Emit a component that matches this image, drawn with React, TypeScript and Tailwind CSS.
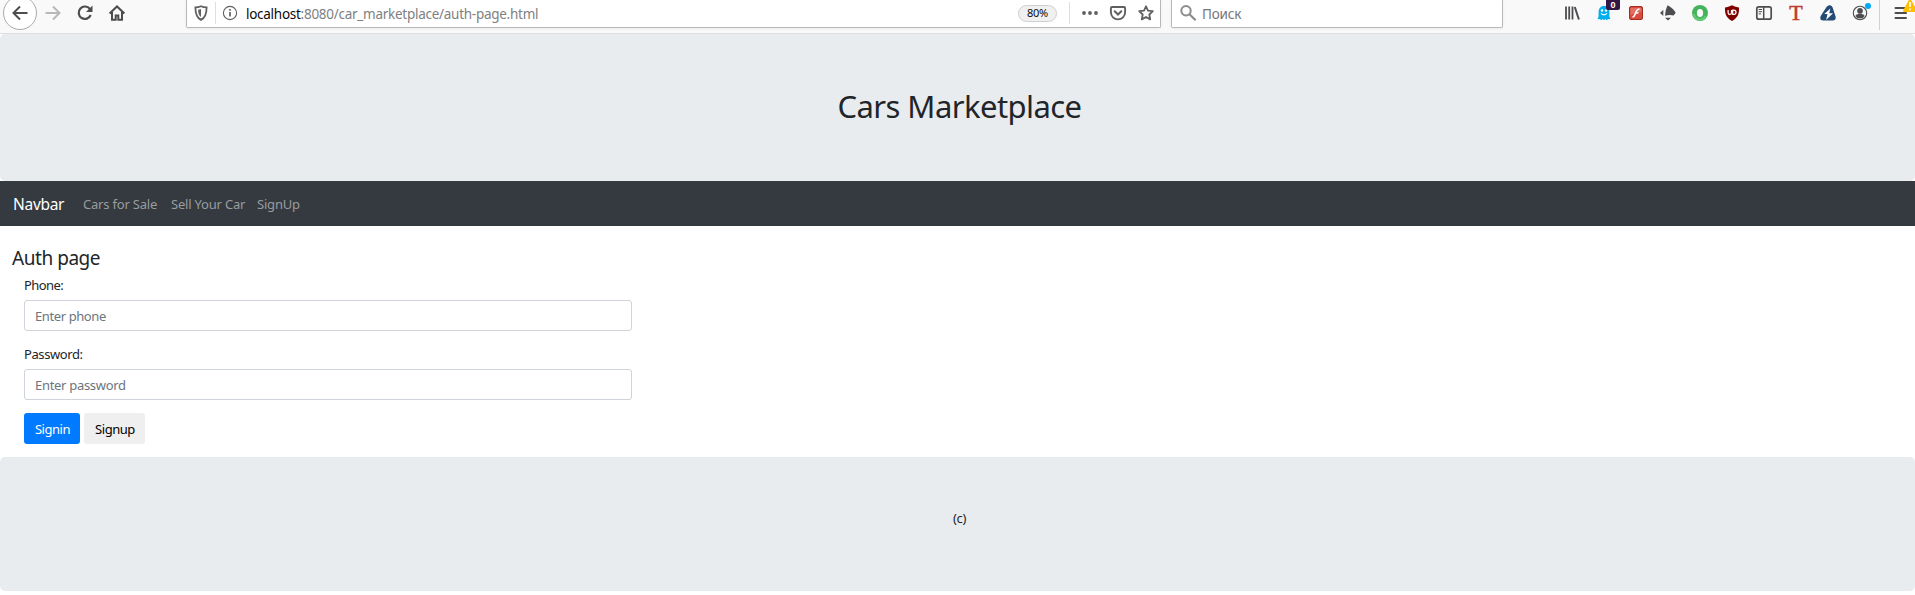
import type { ReactNode } from "react";

function Icon({ children, className = "" }: { children: ReactNode; className?: string }) {
  return (
    <svg viewBox="0 0 16 16" fill="none" className={`block size-4 shrink-0 overflow-visible ${className}`}>
      {children}
    </svg>
  );
}

function Navigation() {
  return (
    <div className="flex h-[26px] w-[186px] shrink-0 items-center pl-[3px] text-[#4d4d4f]">
      <div className="flex size-[34px] shrink-0 items-center justify-center rounded-full border border-[#ababab] bg-white">
        <Icon>
          <path d="M15.500 8H1.500M8 1.500 1.500 8 8 14.500" stroke="currentColor" strokeWidth="2" />
        </Icon>
      </div>
      <Icon className="ml-2 text-[#b8b8b9]">
        <path d="M.5 8h14M8 1.500 14.500 8 8 14.500" stroke="currentColor" strokeWidth="2" />
      </Icon>
      <Icon className="ml-4">
        <path d="M12.900 4A6.200 6.200 0 1 0 13.700 10" stroke="currentColor" strokeWidth="2.200" />
        <path d="M15.500 .5v6.500H9z" fill="currentColor" />
      </Icon>
      <Icon className="ml-4">
        <path d="M.6 8.400 8 1.400l7.400 7M3 7v7.800h3.700v-4.300h2.600v4.300H13V7" stroke="currentColor" strokeWidth="2" />
      </Icon>
    </div>
  );
}

function AddressBar() {
  return (
    <div className="flex h-7 w-[975px] shrink-0 items-center rounded-b-[2px] border border-t-0 border-[#b8b8b8] bg-white pb-px pl-[6px] text-[#606062] shadow-[0_1px_3px_rgba(0,0,0,0.06)]">
      <Icon>
        <path d="M8 1.200c2 .9 4 1.200 5.600 1.200 0 6-.8 10-5.600 12.500C3.200 12.400 2.400 8.400 2.400 2.400 4 2.400 6 2.100 8 1.200z" stroke="currentColor" strokeWidth="1.800" />
        <path d="M8 4v8C5.700 10.500 5.200 8 5.100 4.700 6.200 4.600 7.200 4.400 8 4z" fill="currentColor" />
      </Icon>
      <span className="ml-[6px] h-[22px] w-px bg-[#dedede]" />
      <Icon className="ml-[6px]">
        <circle cx="8" cy="8" r="6.600" stroke="currentColor" strokeWidth="1.100" />
        <path d="M8 7v4.500M8 4v1.700" stroke="currentColor" strokeWidth="1.700" />
      </Icon>
      <span className="ml-[8px] pt-px text-[13.500px] leading-5 tracking-[-0.270px] whitespace-nowrap text-[#808082]">
        <span className="text-[#0c0c0d]">localhost</span>:8080/car_marketplace/auth-page.html
      </span>
      <span className="ml-auto flex h-[17px] w-[39px] items-center justify-center rounded-full border border-[#cfcfcf] bg-[#f0f0f0] pt-px text-[11px] tracking-[-0.3px] text-[#0c0c0d]">
        80%
      </span>
      <span className="ml-3 h-[22px] w-px bg-[#dedede]" />
      <Icon className="ml-[12px]">
        <g fill="currentColor">
          <circle cx="2" cy="8" r="1.900" />
          <circle cx="8" cy="8" r="1.900" />
          <circle cx="14" cy="8" r="1.900" />
        </g>
      </Icon>
      <Icon className="ml-[12px]">
        <path d="M1.900 2h12.200q1 0 1 1v4.300a7.100 7.100 0 0 1-14.200 0V3q0-1 1-1z" stroke="currentColor" strokeWidth="1.900" />
        <path d="m4.700 6.300 3.300 3.200 3.300-3.200" stroke="currentColor" strokeWidth="2" strokeLinecap="round" />
      </Icon>
      <Icon className="mr-[6px] ml-[12px]">
        <path d="m8 1.300 2 4.300 4.800.6-3.500 3.300.9 4.900L8 12l-4.200 2.400.9-4.900L1.200 6.200 6 5.600z" stroke="currentColor" strokeWidth="1.800" strokeLinejoin="round" />
      </Icon>
    </div>
  );
}

function SearchBox() {
  return (
    <div className="ml-[10px] flex h-7 w-[332px] shrink-0 items-center rounded-b-[2px] border border-t-0 border-[#b8b8b8] bg-white pb-px pl-2 shadow-[0_1px_3px_rgba(0,0,0,0.06)]">
      <Icon className="text-[#8c8c8e]">
        <circle cx="6" cy="5.700" r="4.700" stroke="currentColor" strokeWidth="2" />
        <path d="m9.500 9.200 6.100 6.100" stroke="currentColor" strokeWidth="2.200" />
      </Icon>
      <span className="ml-[6px] pt-px text-[13.500px] leading-5 tracking-[-0.150px] text-[#767678]">Поиск</span>
    </div>
  );
}

function Extensions() {
  return (
    <div className="ml-[61px] flex h-[26px] shrink-0 items-center gap-4 text-[#4d4d4f]">
      <Icon>
        <path d="M2 1.500v13M5.200 1.500v13M8.500 1.500v13" stroke="currentColor" strokeWidth="1.800" />
        <path d="m10.800 2 4.100 12.500" stroke="currentColor" strokeWidth="2" />
      </Icon>
      <div className="relative">
        <Icon>
          <path d="M2.600 6.200a5.400 5.400 0 0 1 10.800 0v5.300l1 2.800-2.300-.4-1.300 1.300-1.500-1.300L8 15.200l-1.400-1.300-1.400 1.300-1.300-1.300-2.400.4 1.100-2.800z" fill="#00aef0" />
          <circle cx="6" cy="5.500" r="1.200" fill="#fff" />
          <circle cx="10" cy="5.500" r="1.200" fill="#fff" />
          <path d="M5 8.300q3 3.200 6 0" stroke="#fff" strokeWidth="1.200" />
        </Icon>
        <span className="absolute -top-[5px] left-[10px] flex h-[10px] w-[14px] items-center justify-center rounded-b-[2px] bg-[#331644] font-['Liberation_Sans',sans-serif] text-[9px] leading-[10px] font-bold text-white">
          0
        </span>
      </div>
      <Icon>
        <rect x="1.500" y="1.500" width="13" height="13" rx="1.500" fill="#d94b3d" stroke="#a32c20" />
        <path d="M2.500 3h11v4q-5 0-11 3z" fill="#ec8c80" opacity=".55" />
        <path d="M11.500 4C8.500 4 8 7 7.200 9S5.500 12 4.500 12M7.500 8h3" stroke="#fff" strokeWidth="1.600" />
      </Icon>
      <Icon>
        <path d="M7.500.3q5.500 2.500 8.200 7.500l-2.100 2.700q-3.600-1.300-8.600.2.200-5.700 2.500-10.400zM3.300 4.800v6.200L0 7.900zM5 12.700h6L8 15.500z" fill="currentColor" />
      </Icon>
      <Icon>
        <circle cx="8" cy="8" r="8" fill="#45b35c" />
        <path d="M2 9a6 6 0 0 0 11.500 2" stroke="#64cb78" strokeWidth="2" />
        <ellipse cx="8" cy="8" rx="3.100" ry="4" fill="#fafafa" />
      </Icon>
      <Icon>
        <path d="M8 .2q3.400 1.900 7 2.200c.2 6.100-.8 10-7 13.500C1.800 12.400.8 8.500 1 2.400 4.600 2.100 8 .2 8 .2z" fill="#800000" />
        <path d="M4.100 5v2.700q0 1.600 1.700 1.600t1.700-1.600V5M8.700 5.500v3.800h1.200q2.100 0 2.100-2.100t-2.100-2.100H8.200" stroke="#fff" strokeWidth="1.200" />
      </Icon>
      <Icon>
        <rect x=".8" y="1.800" width="14.400" height="12.400" rx="2" stroke="currentColor" strokeWidth="1.700" />
        <path d="M7.700 2v12" stroke="currentColor" strokeWidth="1.500" />
        <path d="M2.600 4.500H6M2.600 6.700H6M2.600 8.900H5" stroke="currentColor" />
      </Icon>
      <span className="flex size-4 items-center justify-center font-['Liberation_Serif',serif] text-[22px] leading-none text-[#bd3b2b] [-webkit-text-stroke:0.5px_#bd3b2b]">
        T
      </span>
      <Icon>
        <path d="M10.200.2q-2.200-.4-3.500 1.500L.7 11q-1.500 4 2 4.500h10.500q3.400-.8 2.300-4.200L12.600 2.500Q11.800.8 10.200.2z" fill="#244b73" />
        <path d="M10.300 3.500 4.300 9h3.200l-1.400 6L13 8.200H9.300z" fill="#fff" />
      </Icon>
      <div className="relative">
        <Icon>
          <circle cx="8" cy="8" r="6.700" stroke="currentColor" strokeWidth="1.100" />
          <circle cx="8" cy="5.900" r="2.800" fill="currentColor" />
          <path d="M3.300 11q1-1.900 3-2h3.400q2 .1 3 2-1.700 2.500-4.700 2.500T3.300 11z" fill="currentColor" />
        </Icon>
        <span className="absolute -top-[2px] left-[13px] size-[6px] rounded-full bg-[#00a8f5]" />
      </div>
      <div className="-ml-[5px] flex h-[26px] items-center">
        <span className="h-[30px] w-px self-start bg-[#d2d2d3]" />
        <div className="relative ml-[14px]">
          <Icon>
            <path d="M1.500 3h10.500M1.500 8h10.500M1.500 13h10.500" stroke="currentColor" strokeWidth="2" strokeLinecap="round" />
          </Icon>
          <svg viewBox="0 0 14 13" className="absolute -top-[6px] left-[9px] h-[13px] w-[14px]">
            <path d="M7 1 13 12H1z" fill="#ffbf00" stroke="#ffbf00" strokeWidth="2" strokeLinejoin="round" />
            <path d="M7 3v5M7 9.500v1.800" stroke="#fff" strokeWidth="1.600" />
          </svg>
        </div>
      </div>
    </div>
  );
}

type FieldProps = { label: string; placeholder: string; id: string; type: string; labelClass: string; inputClass: string };

function Field({ label, placeholder, id, type, labelClass, inputClass }: FieldProps) {
  return (
    <div className="mb-[13px] flex flex-col">
      <label htmlFor={id} className={`mb-[5px] h-[20px] self-start pt-px text-[13px] leading-[19px] ${labelClass}`}>
        {label}
      </label>
      <input
        id={id}
        type={type}
        placeholder={placeholder}
        className={`h-[31px] w-full rounded-[3px] border border-[#ced4da] px-[10px] text-[13px] outline-none placeholder:text-[#6c757d] ${inputClass}`}
      />
    </div>
  );
}

export default function App() {
  return (
    <div className="flex h-[595px] w-[1915px] flex-col overflow-hidden bg-white font-['Noto_Sans',sans-serif] text-[#212529]">
      <header className="flex h-[34px] shrink-0 items-start border-b border-[#dfdfdf] bg-[#f9f9fa]">
        <Navigation />
        <AddressBar />
        <SearchBox />
        <Extensions />
      </header>
      <div className="flex h-[147px] shrink-0 items-center justify-center rounded-[5px] bg-[#e9ecef] pb-[4px]">
        <h1 className="pl-[4px] text-[31px] leading-[38px] tracking-[-0.560px] whitespace-nowrap">Cars Marketplace</h1>
      </div>
      <nav className="flex h-[45px] shrink-0 items-center bg-[#343a40] pt-[2px] pl-[13px]">
        <a className="w-[70px] text-[15.500px] tracking-[-0.300px] text-white">Navbar</a>
        <ul className="flex text-[13px] tracking-[-0.200px] whitespace-nowrap text-[#999c9f]">
          <li className="w-[88px]">Cars for Sale</li>
          <li className="w-[86px]">Sell Your Car</li>
          <li>SignUp</li>
        </ul>
      </nav>
      <main className="flex h-[231px] shrink-0 flex-col items-start pt-[20px] pl-3">
        <h2 className="h-[25px] text-[19px] leading-[25px] tracking-[-0.450px]">Auth page</h2>
        <form className="mt-[4px] w-[620px] pl-3">
          <Field id="phone" type="tel" label="Phone:" placeholder="Enter phone" labelClass="tracking-[-0.600px]" inputClass="tracking-[-0.400px]" />
          <Field id="password" type="password" label="Password:" placeholder="Enter password" labelClass="tracking-[-0.400px]" inputClass="tracking-[-0.300px]" />
          <div className="flex gap-1 text-[13px] tracking-[-0.450px]">
            <button type="button" className="h-[31px] w-14 rounded-[3px] bg-[#007bff] pt-[2px] pl-px text-white">Signin</button>
            <button type="button" className="h-[31px] w-[61px] rounded-[3px] bg-[#efefef] pt-[2px] pl-px text-black">Signup</button>
          </div>
        </form>
      </main>
      <footer className="flex h-[134px] shrink-0 items-center justify-center rounded-[5px] bg-[#e9ecef] pb-[10px] pl-[4px] text-[13px] tracking-[-0.300px]">
        (c)
      </footer>
    </div>
  );
}
